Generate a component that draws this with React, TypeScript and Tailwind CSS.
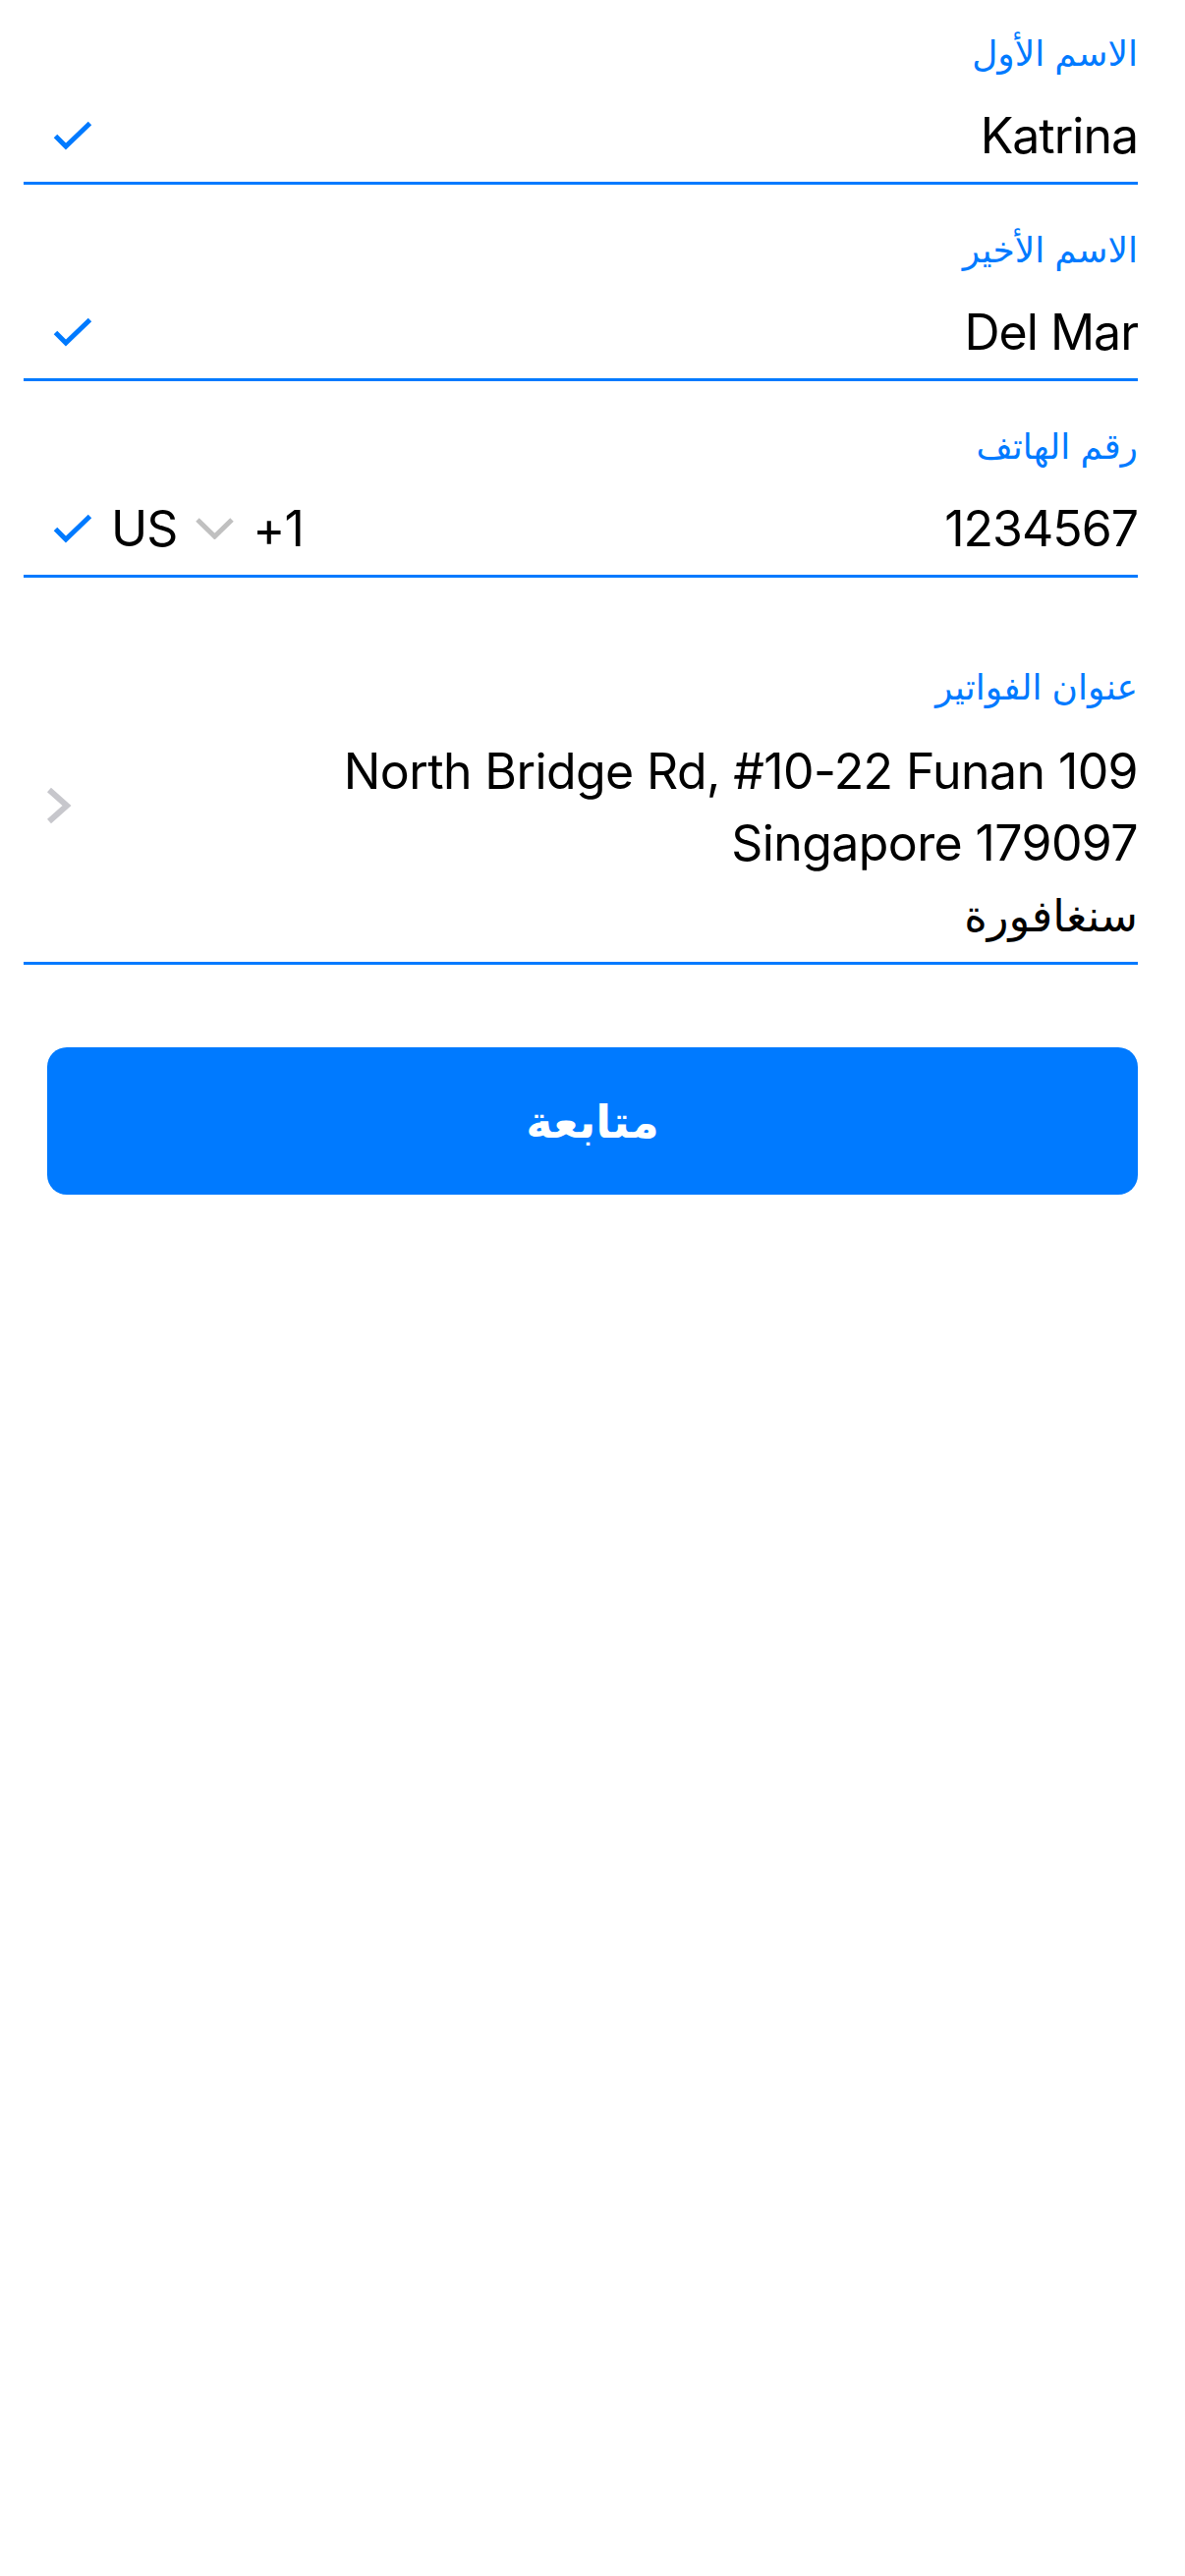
import type { ReactNode } from 'react';

const BLUE = '#007AFF';

function Check() {
  return (
    <svg width="40" height="30" viewBox="0 0 40 30" fill="none" className="shrink-0">
      <path d="M2.5 15.5 L13 26 L37.5 2.5" stroke={BLUE} strokeWidth="5" />
    </svg>
  );
}

function ChevronDown() {
  return (
    <svg width="39" height="22" viewBox="0 0 39 22" fill="none" className="shrink-0">
      <path d="M2 2 L19.5 19 L37 2" stroke="#C0C0C0" strokeWidth="5" />
    </svg>
  );
}

function ChevronRight() {
  return (
    <svg width="26" height="38" viewBox="0 0 26 38" fill="none" className="shrink-0">
      <path d="M3 3 L21 19 L3 35" stroke="#C7C7CC" strokeWidth="6" />
    </svg>
  );
}

function Field({
  label,
  value,
  first,
  trailing,
}: {
  label: string;
  value: string;
  first?: boolean;
  trailing?: ReactNode;
}) {
  return (
    <div className={`${first ? '' : 'pt-[12px]'} pb-[17px] border-b-[3px] border-[#007AFF]`}>
      <div className="h-[108px] flex items-center text-[36px] leading-none text-[#007AFF]">{label}</div>
      <div className="h-[60px] flex items-center justify-between pl-[30px]">
        <span className="text-[50px] tracking-[-1px] leading-none text-black">{value}</span>
        {trailing ?? <Check />}
      </div>
    </div>
  );
}

export default function App() {
  return (
    <div dir="rtl" className="min-h-screen w-full bg-white font-['Inter','DejaVu_Sans',sans-serif]">
      <div className="ml-[24px] mr-[48px]">
        <Field label="الاسم الأول" value="Katrina" first />
        <Field label="الاسم الأخير" value="Del Mar" />
        <Field
          label="رقم الهاتف"
          value="1234567"
          trailing={
            <div dir="ltr" className="flex items-center gap-[19px] text-[50px] tracking-[-1px] leading-none text-black">
              <Check />
              <span>US</span>
              <ChevronDown />
              <span>+1</span>
            </div>
          }
        />

        <div className="pt-[57px] pb-[11px] border-b-[3px] border-[#007AFF] flex items-start justify-between">
          <div>
            <div className="h-[108px] flex items-center text-[36px] leading-none text-[#007AFF]">
              عنوان الفواتير
            </div>
            <div className="-mt-[4px] text-[50px] tracking-[-0.6px] leading-[73px] text-black">
              <div dir="ltr" className="text-right">North Bridge Rd, #10-22 Funan 109</div>
              <div dir="ltr" className="text-right">Singapore 179097</div>
              <div className="text-[45px] tracking-normal">سنغافورة</div>
            </div>
          </div>
          <div className="pl-[23px] pt-[156px]">
            <ChevronRight />
          </div>
        </div>
      </div>

      <button
        type="button"
        className="mt-[84px] ml-[48px] mr-[48px] flex h-[150px] w-[calc(100%-96px)] items-center justify-center rounded-[20px] bg-[#007AFF] text-[46px] font-bold leading-none text-white"
      >
        متابعة
      </button>
    </div>
  );
}
